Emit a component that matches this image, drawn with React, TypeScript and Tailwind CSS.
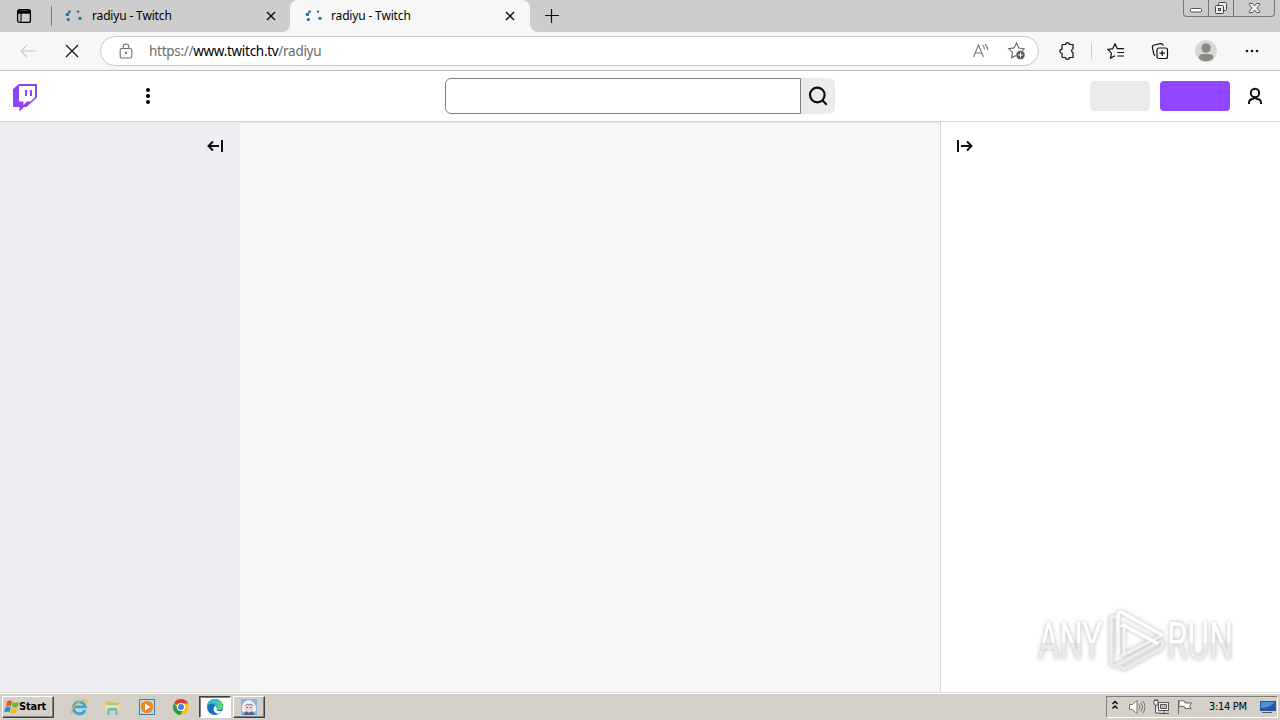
import React from "react";

const LoadingDots = () => (
  <svg width="18" height="14" viewBox="0 0 18 14" fill="#1769a8" className="shrink-0">
    <circle cx="4.5" cy="2.8" r="1.4" />
    <circle cx="2.4" cy="5.4" r="1.7" />
    <circle cx="3.3" cy="10.6" r="1.5" />
    <circle cx="13" cy="2.6" r="1.2" />
    <circle cx="15" cy="9.3" r="1.6" />
  </svg>
);

const TabClose = () => (
  <svg width="10" height="10" viewBox="0 0 10 10" stroke="#111" strokeWidth="1.5" className="shrink-0">
    <path d="M1 1l8 8M9 1L1 9" />
  </svg>
);

const TabStrip = () => (
  <div className="flex h-8 shrink-0 bg-[#f7f7f7]">
    <div className="flex w-[290px] items-center rounded-br-lg bg-[#cdcdcd]">
      <svg width="16" height="16" viewBox="0 0 16 16" className="ml-4" fill="none" stroke="#000">
        <rect x="1.6" y="1.6" width="12.8" height="12.8" rx="2" strokeWidth="1.3" />
        <path d="M2 4h12" strokeWidth="3.4" />
        <path d="M5 5v9" strokeWidth="1.1" />
      </svg>
      <div className="ml-[19px] h-5 w-px bg-[#777]" />
      <div className="ml-[13px] flex">
        <LoadingDots />
      </div>
      <span className="ml-[9px] w-[174px] text-[12px] tracking-[-0.16px] whitespace-nowrap">radiyu - Twitch</span>
      <TabClose />
    </div>
    <div className="w-[240px] bg-[linear-gradient(#cdcdcd_50%,#f7f7f7_50%)]">
      <div className="flex h-full items-center rounded-t-lg bg-[#f7f7f7]">
        <div className="ml-[15px] flex">
          <LoadingDots />
        </div>
        <span className="ml-[8px] w-[174px] text-[12px] tracking-[-0.16px] whitespace-nowrap">radiyu - Twitch</span>
        <TabClose />
      </div>
    </div>
    <div className="flex flex-1 items-start rounded-bl-lg bg-[#cdcdcd]">
      <svg width="14" height="14" viewBox="0 0 14 14" className="mt-[9px] ml-[15px]" stroke="#111" strokeWidth="1.2">
        <path d="M6.500 0v14M0 6.500h14" />
      </svg>
      <div className="mr-[5px] ml-auto flex h-[17px] w-[92px] rounded-b border border-t-0 border-[#777] bg-[#cbcbcb]">
        <div className="w-[25px] border-r border-[#777]">
          <svg width="24" height="16" viewBox="0 0 24 16">
            <rect x="6.5" y="8.5" width="11" height="3.5" rx="1" fill="#fff" stroke="#555" />
          </svg>
        </div>
        <div className="w-[25px] border-r border-[#777]">
          <svg width="24" height="16" viewBox="0 0 24 16" fill="#eee" stroke="#444">
            <rect x="9.5" y="2.5" width="8" height="8" rx="1" />
            <rect x="6.5" y="5.5" width="8" height="8" rx="1" />
            <rect x="9.5" y="8.5" width="2" height="2" />
          </svg>
        </div>
        <svg width="40" height="16" viewBox="0 0 40 16">
          <path
            d="M15.5 3.5h3l2 2.4 2-2.4h3v1.4L22.8 8l2.7 3.1v1.4h-3l-2-2.4-2 2.4h-3v-1.4L18.2 8l-2.7-3.1z"
            fill="#f3f3f3"
            stroke="#555"
          />
        </svg>
      </div>
    </div>
  </div>
);

const Toolbar = () => (
  <div className="flex h-[39px] shrink-0 items-center border-b border-[#bdbdbd] bg-[#f7f7f7]">
    <svg width="18" height="14" viewBox="0 0 18 14" className="ml-[19px]" fill="none" stroke="#c8c8c8" strokeWidth="1.1">
      <path d="M17 7H2M8 1L2 7l6 6" />
    </svg>
    <svg width="14" height="14" viewBox="0 0 14 14" className="ml-7" stroke="#111" strokeWidth="1.2">
      <path d="M1 1l12 12M13 1L1 13" />
    </svg>
    <div className="ml-[21px] flex h-[30px] w-[939px] items-center rounded-full border border-[#cacaca] bg-white">
      <svg width="14" height="16" viewBox="0 0 14 16" className="ml-[18px]" fill="none" stroke="#707070" strokeWidth="1.1">
        <rect x="1.2" y="5.5" width="11.6" height="9.5" rx="1.6" />
        <path d="M4.2 5.5V3.8a2.8 2.8 0 0 1 5.6 0v1.7" />
        <circle cx="7" cy="10" r="0.6" fill="#555" />
      </svg>
      <span className="ml-4 text-[13.5px] tracking-[-0.29px] whitespace-nowrap text-[#6b6b6b]">
        https://<span className="text-black">www.twitch.tv</span>/radiyu
      </span>
      <svg width="18" height="16" viewBox="0 0 18 16" className="ml-auto" fill="none" stroke="#777" strokeWidth="1.1">
        <path d="M1.5 14L6.5 2l5 12M3.3 10h6.4M10.5 2.2q2 1.8 2 4.4M13 1q2.8 2.6 2.8 6.2" />
      </svg>
      <svg width="20" height="20" viewBox="0 0 20 20" className="mr-[11px] ml-[17px]" fill="none">
        <path
          d="M9.5 2l2.4 5 5.3.8-3.8 3.8 1 5-4.9-2.4-4.9 2.5.9-5.3-3.8-3.7 5.4-.8z"
          stroke="#666"
          strokeWidth="1.1"
        />
        <circle cx="13.5" cy="14" r="4.5" fill="#555" stroke="#fff" strokeWidth=".5" />
        <path d="M13.5 11.5v5M11 14h5" stroke="#fff" />
      </svg>
    </div>
    <svg width="18" height="18" viewBox="0 0 18 18" className="ml-[19px]" fill="none" stroke="#111" strokeWidth="1.2">
      <path d="M5 2.500h2.600a1.900 1.900 0 0 1 3.800 0H15v4.300a2 2 0 0 0 0 3.800v4.900h-3.600a1.900 1.900 0 0 1-3.800 0H5a1 1 0 0 1-1-1v-3.200a2.100 2.100 0 1 1 0-4.200V3.500a1 1 0 0 1 1-1z" />
    </svg>
    <div className="ml-[15px] h-4 w-px bg-[#ccc]" />
    <svg width="18" height="18" viewBox="0 0 18 18" className="ml-[15px]" fill="none" stroke="#111" strokeWidth="1.2">
      <path d="M10.2 6.6L8 2 5.7 6.7l-4.9.8 3.6 3.6-.9 5L8 13.7M9.8 6.7H17M10.3 10.5H17M10.3 14H17" />
    </svg>
    <svg width="18" height="18" viewBox="0 0 18 18" className="ml-[26px]" fill="none" stroke="#111" strokeWidth="1.2">
      <rect x="6" y="6" width="10.5" height="10.5" rx="2" />
      <path d="M11.2 8.5v5.5M8.5 11.2H14M4.2 13.6A2.4 2.4 0 0 1 2.7 11.700L1.400 5.700A2.300 2.300 0 0 1 3.200 3L9.500 1.600A2.300 2.300 0 0 1 12.200 3.700" />
    </svg>
    <svg width="22" height="22" viewBox="0 0 22 22" className="ml-[26px]">
      <circle cx="11" cy="11" r="11" fill="#d8d8d6" />
      <circle cx="11" cy="8" r="4.800" fill="#8b8886" />
      <path d="M3.700 18q0-4 4.500-4h5.600q4.500 0 4.500 4-3 3.200-7.300 3.200T3.700 18z" fill="#8b8886" />
    </svg>
    <svg width="16" height="4" viewBox="0 0 16 4" className="ml-[27px]" fill="#111">
      <circle cx="3" cy="2" r="1.300" />
      <circle cx="8" cy="2" r="1.300" />
      <circle cx="13" cy="2" r="1.300" />
    </svg>
  </div>
);

const SiteHeader = () => (
  <div className="flex h-[51px] shrink-0 items-center border-b border-[#d6d6d6] bg-white">
    <svg width="26" height="30" viewBox="0 0 26 30" className="mt-[3px] ml-3">
      <path d="M7 1h18v13.500L14.500 24H12l-4.500 4.500V24H1V6z" fill="#8c44f7" />
      <path d="M7 3h16v11l-4.500 4.500H15L11.500 22v-3.500H7z" fill="#fff" />
      <path d="M13 7h2v6h-2zM18 7h2v6h-2z" fill="#8c44f7" />
    </svg>
    <svg width="4" height="16" viewBox="0 0 4 16" className="ml-[108px]">
      <circle cx="2" cy="2" r="2" />
      <circle cx="2" cy="8" r="2" />
      <circle cx="2" cy="14" r="2" />
    </svg>
    <div className="ml-[295px] h-9 w-[356px] rounded-l-md border border-[#808084] bg-white" />
    <div className="flex h-9 w-[34px] items-center justify-center rounded-r-md bg-[#ebebed]">
      <svg width="20" height="20" viewBox="0 0 20 20" fill="none" stroke="#0e0e10" strokeWidth="2.200">
        <circle cx="9.300" cy="9" r="7.300" />
        <path d="M14 14l4.800 4.800" />
      </svg>
    </div>
    <div className="ml-auto h-[30px] w-[60px] rounded bg-[#ebebed]" />
    <div className="ml-2.5 h-[30px] w-[70px] rounded bg-[#9147ff]" />
    <svg width="16" height="18" viewBox="0 0 16 18" className="mr-[17px] ml-[17px]" fill="none" stroke="#0e0e10" strokeWidth="2">
      <circle cx="8" cy="6" r="4.200" />
      <path d="M2 17v-1.500a4 4 0 0 1 4-3.500l2-1.500 2 1.500a4 4 0 0 1 4 3.500V17" />
    </svg>
  </div>
);

const Page = () => (
  <div className="flex min-h-0 flex-1 bg-[#f7f7f7] shadow-[inset_0_1px_1px_#e4e4e4]">
    <div className="flex w-[240px] justify-end bg-[#eeedf2] pt-[17px] pr-4">
      <svg width="18" height="14" viewBox="0 0 18 14" fill="none" stroke="#0e0e10" strokeWidth="2">
        <path d="M16 1v12M13 7H3M7 2.500L2.500 7 7 11.500" />
      </svg>
    </div>
    <div className="flex-1" />
    <div className="w-[340px] border-l border-[#d6d6d8] bg-white pt-[17px] pl-[15px]">
      <svg width="18" height="14" viewBox="0 0 18 14" fill="none" stroke="#0e0e10" strokeWidth="2">
        <path d="M2 1v12M5 7h10M11 2.500L15.500 7 11 11.500" />
      </svg>
    </div>
  </div>
);

const Watermark = () => (
  <svg
    width="240"
    height="76"
    viewBox="0 0 240 76"
    className="absolute top-[607px] left-[1030px] font-['Roboto',sans-serif] drop-shadow-[0_0_2px_#b4b4b4]"
  >
    <defs>
      <linearGradient id="shine" x1="0" y1="14" x2="0" y2="54" gradientUnits="userSpaceOnUse">
        <stop offset="55%" stopColor="#fff" />
        <stop offset="55%" stopColor="#ebebeb" />
      </linearGradient>
    </defs>
    <g fill="url(#shine)" fontSize="51">
      <text x="8" y="52" textLength="64" lengthAdjust="spacingAndGlyphs">ANY</text>
      <text x="137" y="52" textLength="66" lengthAdjust="spacingAndGlyphs">RUN</text>
    </g>
    <g fill="none" strokeWidth="3.500" strokeLinecap="round" strokeLinejoin="round">
      <path d="M81 47V12q0-3 4-2M93 48l38-19" stroke="#f0f0f0" />
      <path d="M81 47v8q0 6 6 3l44-24" stroke="#ececec" />
      <path d="M90 60l4 2 36-20q4-3 2-8" stroke="#ececec" />
      <path d="M88 46V8q1-4 5-2l39 22M93 18l34 18" stroke="#fff" />
      <path d="M88 46V20l6-2v29" stroke="#f8f8f8" strokeWidth="2" />
    </g>
  </svg>
);

const Taskbar = () => (
  <div className="flex h-7 shrink-0 items-center border-t border-[#e0ddd7] bg-[#d4d0c8] shadow-[inset_0_1px_0_#fff]">
    <div className="mt-px ml-[2px] flex h-[22px] w-[52px] items-center border border-t-white border-r-[#404040] border-b-[#404040] border-l-white shadow-[inset_-1px_-1px_0_#808080]">
      <svg width="16" height="16" viewBox="0 0 16 16" className="ml-px shrink-0">
        <path d="M3 2.500q3-1.800 5.200-.1L7 7.300Q5 5.800 1.800 7.300z" fill="#e85620" />
        <path d="M9 3q3 1.600 6-.2l-1.300 5Q11 9.300 7.900 7.800z" fill="#72b52d" />
        <path d="M1.500 8.500q3-1.700 5.200-.1L5.500 13Q3.300 11.700.2 13.200z" fill="#3285c9" />
        <path d="M7.500 9q3 1.600 5.800-.1L12 13.700q-3 1.700-5.800-.2z" fill="#f6b91b" />
      </svg>
      <span className="-ml-px font-['DejaVu_Sans',sans-serif] text-[11px] font-bold font-stretch-condensed tracking-[-0.2px]">
        Start
      </span>
    </div>
    <svg width="18" height="18" viewBox="0 0 18 18" className="mt-px ml-4" fill="none">
      <path d="M15 12a6 6 0 1 1 .3-3.200H4" stroke="#35a6df" strokeWidth="2.800" />
      <path d="M2.500 16.500C-1 15 5 4 13.500 2q4.500-1 2.500 3.500" stroke="#e8b637" strokeWidth="1.300" />
    </svg>
    <svg width="18" height="18" viewBox="0 0 18 18" className="mt-px ml-4">
      <path d="M1.500 3h5l1 1.500h8V9h-14z" fill="#e6c65c" />
      <path d="M3 5h11v7H3z" fill="#8fcf9d" />
      <path d="M1.500 7h14v6h-14z" fill="#f6df85" />
      <path d="M3.500 17v-5q0-2 2-2h6q2 0 2 2v5h-2v-4.500h-6V17z" fill="#67b5dc" />
    </svg>
    <svg width="18" height="18" viewBox="0 0 18 18" className="mt-px ml-4">
      <rect x="1.500" y="1.500" width="15" height="15" fill="#b8dcf0" stroke="#427da7" />
      <circle cx="9" cy="9" r="6.200" fill="#f18716" />
      <path d="M7 5.500L12.500 9 7 12.500z" fill="#fff" />
    </svg>
    <svg width="18" height="18" viewBox="0 0 18 18" className="mt-px ml-4">
      <circle cx="9" cy="9" r="8" fill="#f4c51d" />
      <path d="M9 9L2.100 5A8 8 0 0 1 16.200 5.500H9z" fill="#df3d31" />
      <path d="M2.100 5L6.500 12l4 1-2.200 4A8 8 0 0 1 2.100 5z" fill="#2b9c4c" />
      <circle cx="9" cy="9" r="4" fill="#fff" />
      <circle cx="9" cy="9" r="3" fill="#3e7fe5" />
    </svg>
    <div className="mt-px ml-[9px] flex h-[22px] w-8 items-center justify-center border border-t-[#404040] border-r-white border-b-white border-l-[#404040] bg-white shadow-[inset_1px_1px_0_#808080]">
      <svg width="18" height="18" viewBox="0 0 18 18">
        <circle cx="9" cy="9" r="8" fill="#1370b8" />
        <path d="M1 8C2 2.500 6 1 9 1c5 0 8 3.500 8 7 0 2.500-2 4-5 4q-2.500 0-1.500-2c0-4-6-6-9.500-2z" fill="#35bdc8" />
        <path d="M14 3q3 2 3 5.500T12 12q-2 0-1.700-1.400Q14 8 11 4z" fill="#64d06b" />
        <path d="M10.500 10q-.5 4 5.500 3-1.500 2-3.500 3-5-1-5-5 0-2 2-3.500z" fill="#fff" />
      </svg>
    </div>
    <div className="mt-px ml-[2px] flex h-[22px] w-8 items-center justify-center border border-t-white border-r-[#404040] border-b-[#404040] border-l-white shadow-[inset_-1px_-1px_0_#808080]">
      <svg width="16" height="16" viewBox="0 0 16 16">
        <path d="M0 0h16v16H0z" fill="#86b8e5" />
        <path d="M1 12Q0 5 5 2q4-3 8 2 3 4 2 8l-3 1H3z" fill="#f3edf4" />
        <path d="M4.500 6h7v5q-3.500 3-7 0z" fill="#eed3c8" />
        <path d="M4 7l2-2 2 1 2-1 2 2" fill="none" stroke="#87759b" />
        <path d="M2 16l3-4 3 2 3-2 3 4z" fill="#53658b" />
        <path d="M5.500 8h1.500v1H5.500zM9 8h1.500v1H9z" fill="#754f75" />
      </svg>
    </div>
    <div className="mt-px mr-[2px] ml-auto flex h-[22px] w-[172px] items-center border border-t-[#808080] border-r-white border-b-white border-l-[#808080]">
      <svg width="8" height="10" viewBox="0 0 8 10" className="mb-1 ml-[4px]" fill="none" stroke="#000" strokeWidth="1.300">
        <path d="M1.500 4L4 1.500 6.500 4M1.500 8.500L4 6l2.500 2.500" />
      </svg>
      <svg width="17" height="16" viewBox="0 0 17 16" className="ml-[10px]" stroke="#777" fill="none">
        <path d="M.5 5.500h3L8 1.500v13l-4.500-4h-3z" fill="#fff" />
        <path d="M10 5.500q1.500 2.500 0 5M12 3.500q3 4.500 0 9M14 2q4 6 0 12" />
      </svg>
      <svg width="18" height="16" viewBox="0 0 18 16" className="ml-[7px]" fill="#eee" stroke="#555">
        <rect x="5.500" y="3.500" width="10" height="8" />
        <path d="M6 14.500h10M11 11v3M2.500 6v8h4M1 1.500h4V5L3 6.500 1 5zM2 0v2M4 0v2" />
        <path d="M7.500 5.500h6v4h-6z" fill="#bbb" />
      </svg>
      <svg width="16" height="16" viewBox="0 0 16 16" className="ml-[6px]" fill="#fff" stroke="#666">
        <path d="M1.500 1v14M2 2.500q3-2 6 0v1.500h6.500l-2 3 1.500 2.500H8V8q-3-2-6 0z" />
      </svg>
      <span className="ml-[16px] w-[43px] font-['DejaVu_Sans',sans-serif] text-[11px] font-stretch-condensed tracking-[-0.3px] whitespace-nowrap">
        3:14 PM
      </span>
      <svg width="16" height="16" viewBox="0 0 16 16" className="ml-[8px]">
        <path d="M0 2h16v10H0z" fill="#2455a0" />
        <path d="M1 3h14Q10 9 1 9z" fill="#4f91d5" />
        <path d="M2 13h10v1H2z" fill="#555" />
      </svg>
    </div>
  </div>
);

const App = () => {
  return (
    <div className="relative flex h-screen w-screen flex-col overflow-hidden bg-white font-['Noto_Sans','Open_Sans',sans-serif] text-black">
      <TabStrip />
      <Toolbar />
      <SiteHeader />
      <Page />
      <Taskbar />
      <Watermark />
    </div>
  );
};

export default App;
